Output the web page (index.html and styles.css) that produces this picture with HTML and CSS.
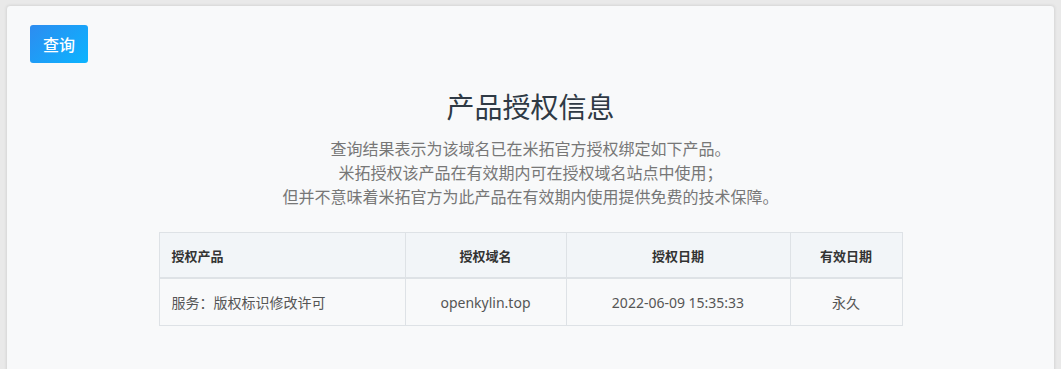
FILE: index.html
```html
<!DOCTYPE html>
<html lang="zh-CN">
<head>
  <meta charset="UTF-8">
  <meta name="viewport" content="width=device-width, initial-scale=1.0">
  <title>产品授权信息</title>
  <link rel="stylesheet" href="styles.css">
</head>
<body>
  <div class="panel">
    <button class="btn-query">查询</button>

    <div class="result">
      <h2 class="result-title">产品授权信息</h2>
      <p class="result-desc">
        查询结果表示为该域名已在米拓官方授权绑定如下产品。<br>
        米拓授权该产品在有效期内可在授权域名站点中使用；<br>
        但并不意味着米拓官方为此产品在有效期内使用提供免费的技术保障。
      </p>

      <table class="auth-table">
        <colgroup>
          <col class="col-product">
          <col class="col-domain">
          <col class="col-date">
          <col class="col-expire">
        </colgroup>
        <thead>
          <tr>
            <th class="left">授权产品</th>
            <th>授权域名</th>
            <th>授权日期</th>
            <th>有效日期</th>
          </tr>
        </thead>
        <tbody>
          <tr>
            <td class="left">服务：版权标识修改许可</td>
            <td>openkylin.top</td>
            <td>2022-06-09 15:35:33</td>
            <td>永久</td>
          </tr>
        </tbody>
      </table>
    </div>
  </div>
</body>
</html>
```

FILE: styles.css
```css
html, body {
  margin: 0;
}
body {
  font-family: "Noto Sans", "Noto Sans CJK SC", sans-serif;
  background-color: #e9e9e9;
  padding: 5px 6px 0 6px;
  height: 369px;
  box-sizing: border-box;
  overflow: hidden;
  color: #333;
}
.panel {
  background-color: #f8f9fa;
  border: 1px solid #dcdcdc;
  border-radius: 4px;
  box-shadow: 0 0 3px rgba(0, 0, 0, 0.08);
  padding: 19px 23px 40px 23px;
  min-height: 420px;
}
.btn-query {
  display: block;
  width: 58px;
  height: 38px;
  border: none;
  border-radius: 3px;
  background: linear-gradient(135deg, #2d8cf0 0%, #0bb4ff 100%);
  color: #fff;
  font-family: inherit;
  font-size: 16px;
  font-weight: 500;
  padding: 0;
  cursor: pointer;
}
.result {
  text-align: center;
}
.result-title {
  margin: 24px 0 0 0;
  font-size: 28px;
  font-weight: normal;
  line-height: 40px;
  color: #2f3a45;
}
.result-desc {
  margin: 10px 0 23px 0;
  font-size: 16px;
  line-height: 24px;
  color: #777;
}
.auth-table {
  margin: 0 auto;
  width: 743px;
  border-collapse: collapse;
  table-layout: fixed;
  font-size: 14px;
}
.col-product { width: 246px; }
.col-domain { width: 161px; }
.col-date { width: 224px; }
.col-expire { width: 112px; }
.auth-table th,
.auth-table td {
  border: 1px solid #dee2e6;
  text-align: center;
  padding: 0 12px;
}
.auth-table th {
  height: 44px;
  background-color: #f2f5f8;
  font-size: 13px;
  font-weight: bold;
  color: #333;
  border-bottom-width: 2px;
}
.auth-table td {
  height: 46px;
  color: #555;
}
.auth-table .left {
  text-align: left;
}
```
